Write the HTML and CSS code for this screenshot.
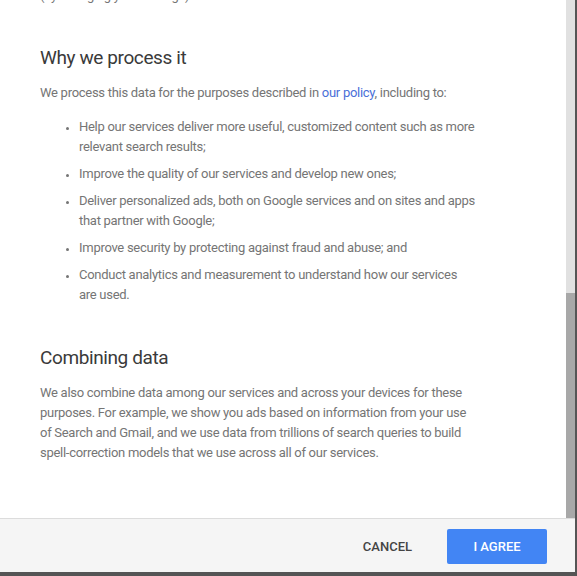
FILE: index.html
```html
<!DOCTYPE html>
<html lang="en">
<head>
<meta charset="utf-8">
<title>Privacy and Terms</title>
<link rel="stylesheet" href="styles.css">
</head>
<body>
<div class="dialog">
  <div class="body">
    <div class="content">
      <p class="text clipped">(by changing your settings)</p>
      <h2 class="title first">Why we process it</h2>
      <p class="text">We process this data for the purposes described in <a class="link" href="#">our policy</a>, including to:</p>
      <ul class="list">
        <li>Help our services deliver more useful, customized content such as more relevant search results;</li>
        <li>Improve the quality of our services and develop new ones;</li>
        <li>Deliver personalized ads, both on Google services and on sites and apps that partner with Google;</li>
        <li>Improve security by protecting against fraud and abuse; and</li>
        <li>Conduct analytics and measurement to understand how our services are used.</li>
      </ul>
      <h2 class="title second">Combining data</h2>
      <p class="text">We also combine data among our services and across your devices for these purposes. For example, we show you ads based on information from your use of Search and Gmail, and we use data from trillions of search queries to build spell-correction models that we use across all of our services.</p>
    </div>
    <div class="scrollbar"><div class="thumb"></div></div>
  </div>
  <div class="footer">
    <button class="btn cancel">CANCEL</button>
    <button class="btn agree">I AGREE</button>
  </div>
</div>
</body>
</html>
```
FILE: styles.css
```css
html, body {
  margin: 0;
  padding: 0;
  background: #555555;
  height: 100%;
}
body {
  font-family: Roboto, "Liberation Sans", Arial, sans-serif;
}
.dialog {
  width: 575px;
  height: 572px;
  background: #ffffff;
  display: flex;
  flex-direction: column;
  overflow: hidden;
}
.body {
  flex: 1;
  display: flex;
  min-height: 0;
  overflow: hidden;
}
.content {
  flex: 1;
  padding: 0 90px 0 40px;
  overflow: hidden;
}
.scrollbar {
  width: 9px;
  background: #e1e1e1;
  display: flex;
  flex-direction: column;
  justify-content: flex-end;
}
.thumb {
  height: 225px;
  background: #a8a8a8;
}
.text {
  font-size: 13px;
  letter-spacing: -0.28px;
  line-height: 20px;
  color: #757575;
  margin: 0;
}
.clipped {
  margin-top: -14px;
}
.link {
  color: #4a6fd8;
  text-decoration: none;
}
.title {
  font-size: 19px;
  letter-spacing: -0.4px;
  line-height: 28px;
  font-weight: 400;
  color: #3a3a3a;
  margin: 0 0 11px 0;
}
.title.first {
  margin-top: 38px;
}
.title.second {
  margin-top: 39px;
}
.list {
  margin: 14px 0 0 0;
  padding: 0 0 0 39px;
  font-size: 13px;
  letter-spacing: -0.28px;
  line-height: 20px;
  color: #757575;
}
.list li {
  margin-top: 7px;
}
.list li:first-child {
  margin-top: 0;
}
.list li::marker {
  font-size: 11px;
}
.footer {
  height: 53px;
  border-top: 1px solid #dcdcdc;
  background: #f5f5f5;
  display: flex;
  align-items: center;
  justify-content: flex-end;
  padding-right: 28px;
  gap: 12px;
}
.btn {
  font-family: Roboto, "Liberation Sans", Arial, sans-serif;
  font-size: 13px;
  font-weight: 500;
  border: none;
  border-radius: 2px;
  cursor: pointer;
  height: 35px;
  margin-top: 2px;
}
.cancel {
  background: transparent;
  color: #444444;
  padding: 0 23px;
}
.agree {
  background: #4285f4;
  color: #ffffff;
  width: 100px;
}
```
